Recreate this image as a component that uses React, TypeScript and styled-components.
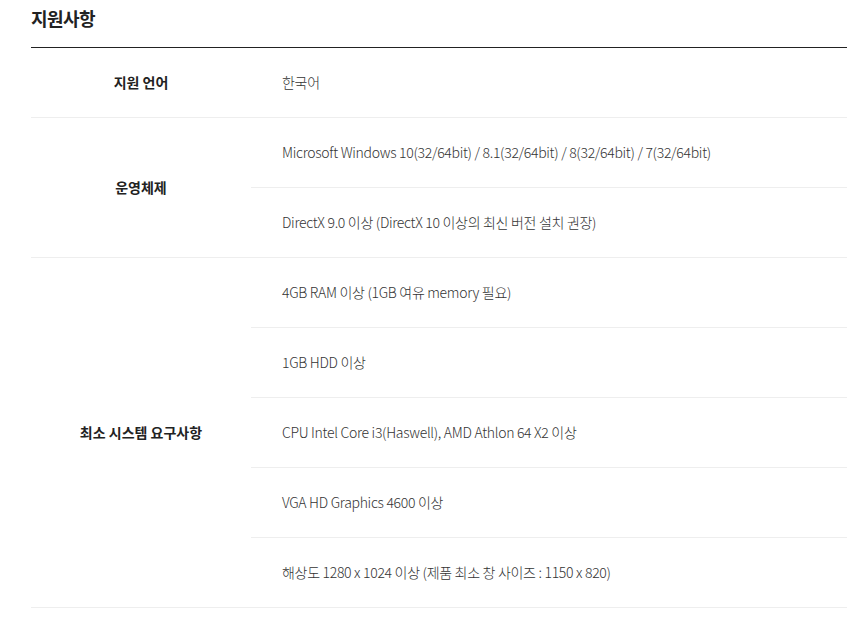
import React from "react";
import styled, { createGlobalStyle } from "styled-components";

const GlobalStyle = createGlobalStyle`
  html, body {
    margin: 0;
    padding: 0;
    background: #fff;
  }
  body {
    font-family: "Noto Sans CJK KR", "Noto Sans", sans-serif;
    color: #333;
  }
`;

const Wrapper = styled.div`
  padding-left: 31px;
  width: 816px;
`;

const Title = styled.h3`
  margin: 0;
  height: 48px;
  padding-top: 5px;
  box-sizing: border-box;
  font-size: 18px;
  font-weight: 700;
  letter-spacing: -0.6px;
  color: #222;
  border-bottom: 1px solid #222;
`;

const Section = styled.div`
  display: flex;
  border-bottom: 1px solid #eee;
`;

const Label = styled.div`
  width: 220px;
  flex-shrink: 0;
  display: flex;
  align-items: center;
  justify-content: center;
  padding-bottom: 2px;
  font-size: 14px;
  font-weight: 700;
  letter-spacing: 0;
  color: #222;
`;

const Values = styled.ul`
  flex: 1;
  margin: 0;
  padding: 0;
  list-style: none;
`;

const Value = styled.li`
  box-sizing: border-box;
  height: 70px;
  display: flex;
  align-items: center;
  padding: 0 0 2px 31px;
  font-size: 14px;
  font-weight: 300;
  letter-spacing: -0.3px;
  color: #333;
  border-bottom: 1px solid #eee;

  &:last-child {
    height: 69px;
    border-bottom: none;
  }
`;

const specs = [
  { label: "지원 언어", values: ["한국어"] },
  {
    label: "운영체제",
    values: [
      "Microsoft Windows 10(32/64bit) / 8.1(32/64bit) / 8(32/64bit) / 7(32/64bit)",
      "DirectX 9.0 이상 (DirectX 10 이상의 최신 버전 설치 권장)",
    ],
  },
  {
    label: "최소 시스템 요구사항",
    values: [
      "4GB RAM 이상 (1GB 여유 memory 필요)",
      "1GB HDD 이상",
      "CPU Intel Core i3(Haswell), AMD Athlon 64 X2 이상",
      "VGA HD Graphics 4600 이상",
      "해상도 1280 x 1024 이상 (제품 최소 창 사이즈 : 1150 x 820)",
    ],
  },
];

const App: React.FC = () => {
  return (
    <>
      <GlobalStyle />
      <Wrapper>
        <Title>지원사항</Title>
        {specs.map((spec) => (
          <Section key={spec.label}>
            <Label>{spec.label}</Label>
            <Values>
              {spec.values.map((v) => (
                <Value key={v}>{v}</Value>
              ))}
            </Values>
          </Section>
        ))}
      </Wrapper>
    </>
  );
};

export default App;
